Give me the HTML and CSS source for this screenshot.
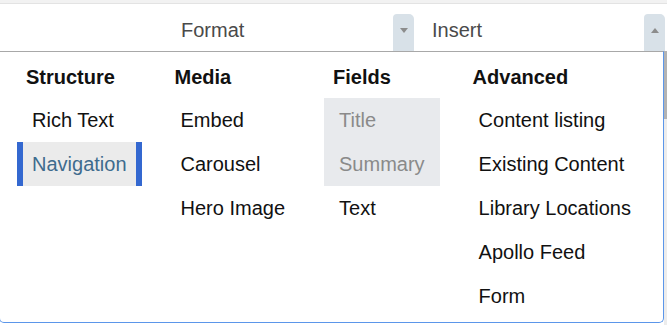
FILE: index.html
```html
<!DOCTYPE html>
<html lang="en">
<head>
<meta charset="UTF-8">
<meta name="viewport" content="width=device-width, initial-scale=1.0">
<title>Editor Insert Menu</title>
<link rel="stylesheet" href="styles.css">
</head>
<body>

<div class="topband"></div>

<div class="toolbar">
    <div class="picker">
        <span class="picker-label">Format</span>
        <span class="picker-btn"><span class="arrow-down"></span></span>
    </div>
    <div class="picker">
        <span class="picker-label">Insert</span>
        <span class="picker-btn"><span class="arrow-up"></span></span>
    </div>
</div>

<div class="stage">
    <div class="menu">
        <div class="menu-col">
            <div class="menu-head">Structure</div>
            <div class="menu-item">Rich Text</div>
            <div class="menu-item active">Navigation</div>
        </div>
        <div class="menu-col">
            <div class="menu-head">Media</div>
            <div class="menu-item">Embed</div>
            <div class="menu-item">Carousel</div>
            <div class="menu-item">Hero Image</div>
        </div>
        <div class="menu-col">
            <div class="menu-head">Fields</div>
            <div class="menu-item disabled">Title</div>
            <div class="menu-item disabled">Summary</div>
            <div class="menu-item">Text</div>
        </div>
        <div class="menu-col">
            <div class="menu-head">Advanced</div>
            <div class="menu-item">Content listing</div>
            <div class="menu-item">Existing Content</div>
            <div class="menu-item">Library Locations</div>
            <div class="menu-item">Apollo Feed</div>
            <div class="menu-item">Form</div>
        </div>
    </div>
    <div class="scroll">
        <div class="scroll-thumb"></div>
    </div>
</div>

</body>
</html>
```

FILE: styles.css
```css
body {
    font-family: 'Liberation Sans', Arial, sans-serif;
    margin: 0;
    padding: 0;
    background-color: #fff;
    overflow: hidden;
}
.topband {
    height: 3px;
    background-color: #f2f2f2;
    border-bottom: 1px solid #e3e3e3;
}
.toolbar {
    display: flex;
    gap: 3px;
    height: 37px;
    padding: 10px 0 0 166px;
}
.picker {
    display: flex;
    width: 248px;
    height: 37px;
}
.picker-label {
    flex-grow: 1;
    padding-left: 15px;
    font-size: 20px;
    line-height: 33px;
    color: #4a4a4a;
}
.picker-btn {
    display: flex;
    align-items: center;
    justify-content: center;
    width: 21px;
    background-color: #d8e1e8;
    border-radius: 4px 5px 0 0;
    padding-bottom: 4px;
    box-sizing: border-box;
}
.arrow-down {
    width: 0;
    height: 0;
    border-left: 4px solid transparent;
    border-right: 4px solid transparent;
    border-top: 5px solid #8c8c8c;
}
.arrow-up {
    width: 0;
    height: 0;
    border-left: 4px solid transparent;
    border-right: 4px solid transparent;
    border-bottom: 5px solid #8c8c8c;
}
.stage {
    display: flex;
    align-items: flex-start;
}
.menu {
    display: flex;
    gap: 24px;
    width: 665px;
    margin-left: -1px;
    box-sizing: border-box;
    padding: 4px 0 4px 17px;
    border: 1px solid #5b96ea;
    border-top-color: #a8a8a8;
    border-radius: 0 0 5px 5px;
}
.menu-col {
    display: flex;
    flex-direction: column;
}
.menu-head {
    font-size: 20px;
    font-weight: bold;
    line-height: 42px;
    padding-left: 9px;
    color: #111;
}
.menu-item {
    font-size: 20px;
    line-height: 44px;
    padding: 0 9px;
    border-left: 6px solid transparent;
    border-right: 6px solid transparent;
    color: #111;
    white-space: nowrap;
}
.menu-item.active {
    background-color: #ebebeb;
    border-color: #3468d0;
    color: #3e6b8e;
}
.menu-item.disabled {
    background-color: #e8eaed;
    color: #8a8a8a;
}
.scroll {
    width: 3px;
    height: 274px;
    background-color: #ececec;
}
.scroll-thumb {
    height: 68px;
    background-color: #b3b3b3;
}
```
